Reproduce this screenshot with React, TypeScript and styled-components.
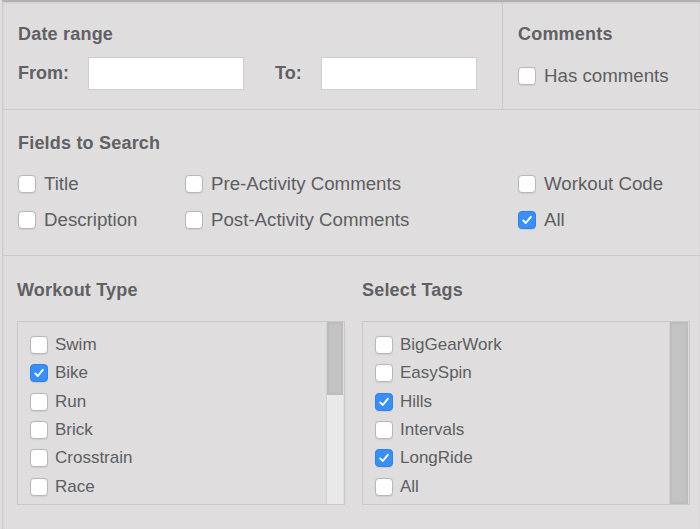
import React from "react"
import styled, { createGlobalStyle } from "styled-components"

const GlobalStyle = createGlobalStyle`
  html, body {
    margin: 0;
    padding: 0;
    background: #dfdddd;
  }
  body {
    font-family: "Liberation Sans", Arial, Helvetica, sans-serif;
    color: #5d5d63;
  }
  * {
    box-sizing: border-box;
  }
`

// only the first six types are in view, the thumb shows the rest
const workoutTypes = [
  { label: "Swim", checked: false },
  { label: "Bike", checked: true },
  { label: "Run", checked: false },
  { label: "Brick", checked: false },
  { label: "Crosstrain", checked: false },
  { label: "Race", checked: false },
]

const tags = [
  { label: "BigGearWork", checked: false },
  { label: "EasySpin", checked: false },
  { label: "Hills", checked: true },
  { label: "Intervals", checked: false },
  { label: "LongRide", checked: true },
  { label: "All", checked: false },
]

const Box = ({ checked }: { checked?: boolean }) => (
  <CheckBox $checked={checked}>
    {checked && (
      <svg width="12" height="12" viewBox="0 0 12 12">
        <path
          d="M2.2 6.4 L4.8 9 L9.8 2.8"
          fill="none"
          stroke="#fff"
          strokeWidth="1.9"
          strokeLinecap="round"
          strokeLinejoin="round"
        />
      </svg>
    )}
  </CheckBox>
)

const App = () => {
  return (
    <Panel>
      <GlobalStyle />
      <TopRow>
        <DateSection>
          <Heading>Date range</Heading>
          <DateRow>
            <FieldLabel>From:</FieldLabel>
            <DateInput type="text" />
            <FieldLabel $spaced>To:</FieldLabel>
            <DateInput type="text" />
          </DateRow>
        </DateSection>
        <CommentsSection>
          <Heading>Comments</Heading>
          <Option>
            <Box />
            <span>Has comments</span>
          </Option>
        </CommentsSection>
      </TopRow>

      <FieldsSection>
        <Heading>Fields to Search</Heading>
        <FieldsGrid>
          <Option>
            <Box />
            <span>Title</span>
          </Option>
          <Option>
            <Box />
            <span>Pre-Activity Comments</span>
          </Option>
          <Option>
            <Box />
            <span>Workout Code</span>
          </Option>
          <Option>
            <Box />
            <span>Description</span>
          </Option>
          <Option>
            <Box />
            <span>Post-Activity Comments</span>
          </Option>
          <Option>
            <Box checked />
            <span>All</span>
          </Option>
        </FieldsGrid>
      </FieldsSection>

      <ListsSection>
        <ListColumn>
          <Heading>Workout Type</Heading>
          <ListBox>
            <Items>
              {workoutTypes.map((w) => (
                <ListItem key={w.label}>
                  <Box checked={w.checked} />
                  <span>{w.label}</span>
                </ListItem>
              ))}
            </Items>
            <Track>
              <Thumb style={{ height: `${(6 / 15) * 100}%` }} />
            </Track>
          </ListBox>
        </ListColumn>
        <ListColumn>
          <Heading>Select Tags</Heading>
          <ListBox>
            <Items>
              {tags.map((t) => (
                <ListItem key={t.label}>
                  <Box checked={t.checked} />
                  <span>{t.label}</span>
                </ListItem>
              ))}
            </Items>
            <Track $wide>
              <Thumb style={{ height: "100%" }} />
            </Track>
          </ListBox>
        </ListColumn>
      </ListsSection>
    </Panel>
  )
}

export default App

const Panel = styled.div`
  margin-left: 2px;
  min-height: 529px;
  border-left: 1px solid #cbc9c9;
  border-top: 2px solid #b3b1b1;
  box-shadow: inset 0 1px 2px rgba(0, 0, 0, 0.08);
  background: #dfdddd;
`

const TopRow = styled.div`
  display: grid;
  grid-template-columns: 499px 1fr;
  height: 108px;
  border-bottom: 1px solid #cbc9c9;
`

const Heading = styled.h3`
  margin: 0;
  font-size: 18px;
  line-height: 22px;
  font-weight: bold;
  color: #606066;
  letter-spacing: 0.2px;
`

const DateSection = styled.div`
  padding: 21px 0 0 15px;
  ${Heading} {
    margin-bottom: 12px;
  }
`

const DateRow = styled.div`
  display: flex;
  align-items: center;
`

const FieldLabel = styled.label<{ $spaced?: boolean }>`
  font-size: 18px;
  font-weight: bold;
  color: #606066;
  margin-left: ${(p) => (p.$spaced ? "31px" : "0")};
  margin-right: 19px;
`

const DateInput = styled.input`
  width: 156px;
  height: 33px;
  border: 1px solid #cfcdcd;
  background: #fff;
  padding: 0 6px;
  font-size: 16px;
  outline: none;
`

const CommentsSection = styled.div`
  border-left: 1px solid #cbc9c9;
  padding: 21px 0 0 15px;
  ${Heading} {
    margin-bottom: 20px;
  }
`

const Option = styled.label`
  display: flex;
  align-items: center;
  gap: 8px;
  font-size: 18.7px;
  line-height: 22px;
  color: #5d5d63;
  white-space: nowrap;
`

const CheckBox = styled.span<{ $checked?: boolean }>`
  flex: none;
  width: 18px;
  height: 18px;
  border-radius: 4px;
  border: 1px solid ${(p) => (p.$checked ? "#2f82ea" : "#b9b8b8")};
  background: ${(p) => (p.$checked ? "#3a8ff6" : "#fff")};
  box-shadow: 0 0.5px 1px rgba(0, 0, 0, 0.08);
  display: flex;
  align-items: center;
  justify-content: center;
`

const FieldsSection = styled.div`
  height: 146px;
  padding: 22px 0 0 15px;
  border-bottom: 1px solid #cbc9c9;
  ${Heading} {
    margin-bottom: 19px;
  }
`

const FieldsGrid = styled.div`
  display: grid;
  grid-template-columns: 167px 333px 1fr;
  row-gap: 14px;
`

const ListsSection = styled.div`
  display: grid;
  grid-template-columns: 328px 328px;
  column-gap: 17px;
  padding: 23px 0 0 14px;
`

const ListColumn = styled.div`
  ${Heading} {
    margin-bottom: 20px;
  }
`

const ListBox = styled.div`
  display: flex;
  height: 184px;
  border: 1px solid #c9c7c7;
  background: #dfdddd;
`

const Items = styled.div`
  flex: 1;
  overflow: hidden;
  padding: 9px 0 0 12px;
`

const ListItem = styled.label`
  display: flex;
  align-items: center;
  gap: 7px;
  height: 28.3px;
  font-size: 17px;
  color: #5d5d63;
  white-space: nowrap;
`

const Track = styled.div<{ $wide?: boolean }>`
  flex: none;
  width: ${(p) => (p.$wide ? "19px" : "17px")};
  margin-right: 1px;
  background: #e9e8ea;
  border-left: 1px solid #d4d2d2;
  display: flex;
  flex-direction: column;
`

const Thumb = styled.div`
  background: #c4c3c3;
  box-shadow: inset 0 0 0 2px #bdbcbc, inset 0 0 3px rgba(0, 0, 0, 0.12);
`
